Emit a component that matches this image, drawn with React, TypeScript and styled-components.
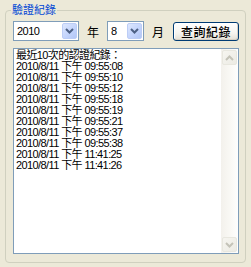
import React from "react";
import styled, { createGlobalStyle } from "styled-components";

const Global = createGlobalStyle`
  html, body { margin: 0; padding: 0; background: #ece9d8; }
  body { width: 251px; height: 267px; overflow: hidden; font-family: "Liberation Sans", "Noto Sans CJK TC", sans-serif; }
`;

const Page = styled.div`
  width: 251px;
  height: 267px;
  box-sizing: border-box;
  padding: 10px 6px 0 5px;
  background: #ece9d8;
`;

const Group = styled.div`
  position: relative;
  box-sizing: border-box;
  width: 241px;
  height: 253px;
  border: 1px solid #d0d0bf;
  border-radius: 4px;
  padding: 10px 6px 8px 7px;
  display: flex;
  flex-direction: column;
  gap: 7px;
`;

const Legend = styled.span`
  position: absolute;
  top: -9px;
  left: 5px;
  padding: 0 1px;
  background: #ece9d8;
  color: #0046d5;
  font-size: 11px;
  line-height: 14px;
  font-family: "Noto Sans CJK TC", sans-serif;
`;

const Toolbar = styled.div`
  display: flex;
  align-items: center;
  height: 20px;
`;

const Combo = styled.div<{ $w: number }>`
  box-sizing: border-box;
  width: ${(p) => p.$w}px;
  height: 20px;
  border: 1px solid #7f9db9;
  background: #fff;
  display: flex;
  align-items: center;
`;

const ComboText = styled.span`
  flex: 1;
  padding-left: 3px;
  font-size: 11px;
  letter-spacing: -0.5px;
  color: #000;
`;

const DropBtn = styled.div`
  box-sizing: border-box;
  width: 15px;
  height: 16px;
  margin-right: 1px;
  border: 1px solid #bccdf6;
  border-radius: 2px;
  background: linear-gradient(135deg, #dde7fe 0%, #c2d3fc 60%, #b3c7f5 100%);
  display: flex;
  align-items: center;
  justify-content: center;
`;

const Label = styled.span<{ $ml: number; $mr: number }>`
  margin: 0 ${(p) => p.$mr}px 0 ${(p) => p.$ml}px;
  font-size: 12px;
  font-family: "Noto Sans CJK TC", sans-serif;
  color: #000;
`;

const Button = styled.button`
  box-sizing: border-box;
  width: 66px;
  height: 19px;
  margin-left: 9px;
  padding: 0;
  border: 1px solid #003c74;
  border-radius: 3px;
  background: linear-gradient(180deg, #ffffff 0%, #f5f4ef 60%, #e3e0d6 100%);
  box-shadow: inset -1px -1px 0 #d6d0c5, inset 1px 1px 0 #fff;
  font-family: "Noto Sans CJK TC", sans-serif;
  font-size: 12px;
  font-weight: 500;
  letter-spacing: 0.5px;
  color: #000;
  line-height: 17px;
`;

const ListBox = styled.div`
  flex: 1;
  box-sizing: border-box;
  width: 226px;
  border: 1px solid #7f9db9;
  background: #fff;
  display: flex;
`;

const Lines = styled.div`
  flex: 1;
  padding: 1px 0 0 2px;
  font-size: 11px;
  line-height: 11px;
  letter-spacing: -0.6px;
  color: #000;
`;

const Line = styled.div`
  white-space: nowrap;
  height: 11px;
`;

const ScrollBar = styled.div`
  width: 17px;
  display: flex;
  flex-direction: column;
  justify-content: space-between;
  background: linear-gradient(90deg, #f3f1ec 0%, #f9f8f4 50%, #fefefe 100%);
`;

const ScrollBtn = styled.div`
  box-sizing: border-box;
  width: 15px;
  height: 15px;
  margin: 1px;
  border: 1px solid #e8e7df;
  border-radius: 2px;
  background: linear-gradient(135deg, #f6f5f0 0%, #ecebe4 100%);
  display: flex;
  align-items: center;
  justify-content: center;
`;

const Arrow = ({ up, color, w = 2 }: { up?: boolean; color: string; w?: number }) => (
  <svg width="9" height="6" viewBox="0 0 9 6">
    <polyline
      points={up ? "1,5 4.5,1.5 8,5" : "1,1 4.5,4.5 8,1"}
      fill="none"
      stroke={color}
      strokeWidth={w}
    />
  </svg>
);

const records = [
  "2010/8/11 下午 09:55:08",
  "2010/8/11 下午 09:55:10",
  "2010/8/11 下午 09:55:12",
  "2010/8/11 下午 09:55:18",
  "2010/8/11 下午 09:55:19",
  "2010/8/11 下午 09:55:21",
  "2010/8/11 下午 09:55:37",
  "2010/8/11 下午 09:55:38",
  "2010/8/11 下午 11:41:25",
  "2010/8/11 下午 11:41:26",
];

export default function App() {
  return (
    <Page>
      <Global />
      <Group>
        <Legend>驗證紀錄</Legend>
        <Toolbar>
          <Combo $w={66}>
            <ComboText>2010</ComboText>
            <DropBtn>
              <Arrow color="#4d6185" />
            </DropBtn>
          </Combo>
          <Label $ml={8} $mr={8}>年</Label>
          <Combo $w={37}>
            <ComboText>8</ComboText>
            <DropBtn>
              <Arrow color="#4d6185" />
            </DropBtn>
          </Combo>
          <Label $ml={8} $mr={0}>月</Label>
          <Button>查詢紀錄</Button>
        </Toolbar>
        <ListBox>
          <Lines>
            <Line>最近10次的認證紀錄：</Line>
            {records.map((r, i) => (
              <Line key={i}>{r}</Line>
            ))}
          </Lines>
          <ScrollBar>
            <ScrollBtn>
              <Arrow up color="#c4c3b8" />
            </ScrollBtn>
            <ScrollBtn>
              <Arrow color="#c4c3b8" />
            </ScrollBtn>
          </ScrollBar>
        </ListBox>
      </Group>
    </Page>
  );
}
